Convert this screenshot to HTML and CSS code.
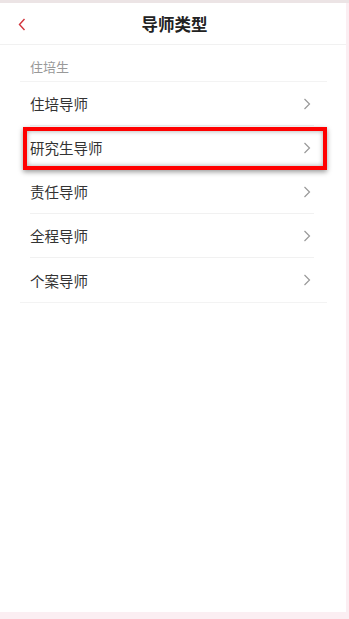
FILE: index.html
```html
<!DOCTYPE html>
<html lang="zh">
<head>
<meta charset="utf-8">
<title>导师类型</title>
<link rel="stylesheet" href="styles.css">
</head>
<body>
<div class="app">
  <div class="panel">
    <header class="header">
      <span class="back">
        <svg width="8" height="13" viewBox="0 0 8 13"><path d="M6.5 1 L1.5 6.5 L6.5 12" fill="none" stroke="#d2343c" stroke-width="1.4"/></svg>
      </span>
      <h1 class="title">导师类型</h1>
    </header>
    <div class="list">
      <div class="section-label">住培生</div>
      <div class="item"><span>住培导师</span><svg class="arrow" width="8" height="12" viewBox="0 0 8 12"><path d="M1.5 1 L6.5 6 L1.5 11" fill="none" stroke="#999" stroke-width="1.2"/></svg></div>
      <div class="item"><span>研究生导师</span><svg class="arrow" width="8" height="12" viewBox="0 0 8 12"><path d="M1.5 1 L6.5 6 L1.5 11" fill="none" stroke="#999" stroke-width="1.2"/></svg><div class="highlight"></div></div>
      <div class="item"><span>责任导师</span><svg class="arrow" width="8" height="12" viewBox="0 0 8 12"><path d="M1.5 1 L6.5 6 L1.5 11" fill="none" stroke="#999" stroke-width="1.2"/></svg></div>
      <div class="item"><span>全程导师</span><svg class="arrow" width="8" height="12" viewBox="0 0 8 12"><path d="M1.5 1 L6.5 6 L1.5 11" fill="none" stroke="#999" stroke-width="1.2"/></svg></div>
      <div class="item last"><span>个案导师</span><svg class="arrow" width="8" height="12" viewBox="0 0 8 12"><path d="M1.5 1 L6.5 6 L1.5 11" fill="none" stroke="#999" stroke-width="1.2"/></svg></div>
    </div>
  </div>
</div>
</body>
</html>
```
FILE: styles.css
```css
html, body {
  margin: 0;
  padding: 0;
  height: 100%;
}
body {
  font-family: "Noto Sans CJK SC", "Noto Sans", sans-serif;
  background: #fbeef2;
}
.app {
  box-sizing: border-box;
  height: 100vh;
  display: flex;
  flex-direction: column;
  background: #fbeef2;
  border-top: 3px solid #ece4e5;
  padding: 0 3px 7px 0;
}
.panel {
  flex: 1;
  background: #fff;
}
.header {
  height: 42px;
  box-sizing: border-box;
  border-bottom: 1px solid #f1f1f1;
  display: flex;
  align-items: center;
  justify-content: center;
  position: relative;
}
.back {
  position: absolute;
  left: 18px;
  top: 15px;
  display: flex;
}
.title {
  margin: 0;
  font-size: 16.5px;
  font-weight: bold;
  color: #222;
  line-height: 20px;
  padding-left: 3px;
}
.list {
  margin: 0 19px 0 20px;
  border-bottom: 1px solid #f3f3f3;
}
.section-label {
  height: 37px;
  box-sizing: border-box;
  padding: 13px 10px 0;
  font-size: 13px;
  line-height: 18px;
  color: #999;
  border-bottom: 1px solid #f3f3f3;
}
.item {
  position: relative;
  margin: 0 13px 0 10px;
  height: 44px;
  box-sizing: border-box;
  display: flex;
  align-items: center;
  justify-content: space-between;
  font-size: 14.5px;
  color: #333;
  border-bottom: 1px solid #f1f1f1;
  padding-right: 3px;
}
.item.last {
  border-bottom: none;
}
.arrow {
  display: block;
}
.highlight {
  position: absolute;
  left: -7px;
  right: -13px;
  top: 1px;
  bottom: -1px;
  border: 4px solid #ff0000;
  box-shadow: 0 2px 5px rgba(0,0,0,0.4), inset 0 0 5px rgba(0,0,0,0.35);
  pointer-events: none;
}
```
